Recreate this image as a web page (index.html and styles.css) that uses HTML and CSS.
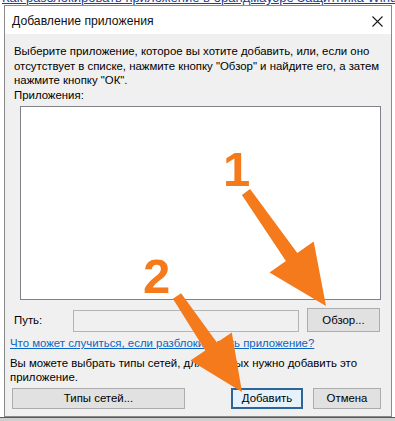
FILE: index.html
```html
<!DOCTYPE html>
<html lang="ru">
<head>
    <meta charset="UTF-8">
    <meta name="viewport" content="width=device-width, initial-scale=1.0">
    <title>Добавление приложения</title>
    <link rel="stylesheet" href="styles.css">
</head>
<body>
    <div class="screen">
        <div class="backdrop-top">
            <span>Как разблокировать приложение в брандмауэре Защитника Windows</span>
        </div>

        <div class="dialog">
            <div class="titlebar">
                <span class="title">Добавление приложения</span>
                <svg class="close" width="11" height="11" viewBox="0 0 11 11">
                    <path d="M0.5 0.5 L10.5 10.5 M10.5 0.5 L0.5 10.5" stroke="#1a1a1a" stroke-width="1.1" fill="none"/>
                </svg>
            </div>

            <div class="content">
                <p class="intro">Выберите приложение, которое вы хотите добавить, или, если оно<br>отсутствует в списке, нажмите кнопку "Обзор" и найдите его, а затем<br>нажмите кнопку "ОК".</p>
                <div class="label">Приложения:</div>
                <div class="listbox"></div>

                <div class="path-row">
                    <span class="path-label">Путь:</span>
                    <div class="path-input"></div>
                    <button class="btn browse">Обзор...</button>
                </div>

                <a class="link" href="#">Что может случиться, если разблокировать приложение?</a>
                <p class="note">Вы можете выбрать типы сетей, для которых нужно добавить это<br>приложение.</p>

                <div class="actions">
                    <button class="btn networks">Типы сетей...</button>
                    <span class="spacer"></span>
                    <button class="btn default">Добавить</button>
                    <button class="btn cancel">Отмена</button>
                </div>
            </div>
        </div>
        <div class="backdrop-bottom"></div>

        <svg class="arrows" width="395" height="421" viewBox="0 0 395 421">
            <polygon points="241.9,194.9 250.1,189.1 297.3,252.9 313.7,241.4 326,306 269.5,272.4 285.9,260.9" fill="#f47a1c"/>
            <polygon points="172.9,298.8 181.1,293.2 216.9,342.6 231.8,332.5 242,392 190.4,360.5 205.3,350.4" fill="#f47a1c"/>
            <text class="digit" x="223" y="186">1</text>
            <text class="digit" x="143" y="293">2</text>
        </svg>
    </div>
</body>
</html>
```

FILE: styles.css
```css
body {
    margin: 0;
    padding: 0;
    background-color: #ffffff;
    font-family: 'Liberation Sans', Arial, sans-serif;
    font-size: 11.4px;
    color: #000000;
}

.screen {
    position: relative;
    width: 395px;
    height: 421px;
    overflow: hidden;
    background-color: #ffffff;
}

.backdrop-top {
    height: 5px;
    overflow: hidden;
    display: flex;
    align-items: flex-end;
    padding-left: 2px;
}

.backdrop-top span {
    color: #1f3f8f;
    text-decoration: underline;
    font-size: 13px;
    line-height: 13px;
    margin-bottom: 1px;
    white-space: nowrap;
}

.dialog {
    margin-left: 4px;
    width: 386px;
    height: 410px;
    border: 1px solid #8a8a8a;
    display: flex;
    flex-direction: column;
}

.titlebar {
    height: 28px;
    flex: none;
    background-color: #ffffff;
    display: flex;
    align-items: center;
    justify-content: space-between;
    padding: 2px 8px 0 7px;
    box-sizing: border-box;
}

.title {
    font-size: 12.2px;
    color: #111111;
}

.close {
    margin-top: 1px;
}

.content {
    flex: 1;
    background-color: #f0f0f0;
    padding: 10px 10px 0 5px;
    line-height: 14.5px;
}

.intro {
    margin: 0 0 0 4px;
    white-space: nowrap;
}

.label {
    margin-left: 4px;
}

.listbox {
    margin: 4px 0 0 10px;
    height: 192px;
    background-color: #ffffff;
    border: 1px solid #7f8288;
}

.path-row {
    display: flex;
    align-items: center;
    margin-top: 8px;
    height: 24px;
}

.path-label {
    width: 59px;
    margin-left: 4px;
    flex: none;
}

.path-input {
    width: 224px;
    height: 20px;
    border: 1px solid #b4b4b4;
    background-color: #f0f0f0;
    margin-top: 2px;
}

.btn {
    font-family: inherit;
    font-size: 11.4px;
    color: #000000;
    background-color: #e1e1e1;
    border: 1px solid #adadad;
    padding: 0;
    height: 21px;
}

.browse {
    margin-left: 8px;
    width: 73px;
    height: 24px;
}

.link {
    display: block;
    margin-top: 4px;
    color: #0a66c2;
    text-decoration: underline;
    white-space: nowrap;
}

.note {
    margin: 5px 0 0;
    white-space: nowrap;
}

.actions {
    display: flex;
    margin-top: 3px;
    gap: 10px;
}

.networks {
    width: 173px;
    margin-left: 2px;
}

.spacer {
    flex: 1;
}

.default {
    width: 72px;
    background-color: #e5f1fb;
    border: 2px solid #2f6596;
}

.cancel {
    width: 68px;
}

.backdrop-bottom {
    height: 5px;
    background-color: #cfcfcf;
    border-top: 1px solid #5a5a5a;
}

.arrows {
    position: absolute;
    left: 0;
    top: 0;
}

.digit {
    font-family: 'Liberation Sans', sans-serif;
    font-weight: bold;
    font-size: 49px;
    fill: #f47a1c;
    stroke: #ffffff;
    stroke-width: 3px;
    paint-order: stroke;
}
```
